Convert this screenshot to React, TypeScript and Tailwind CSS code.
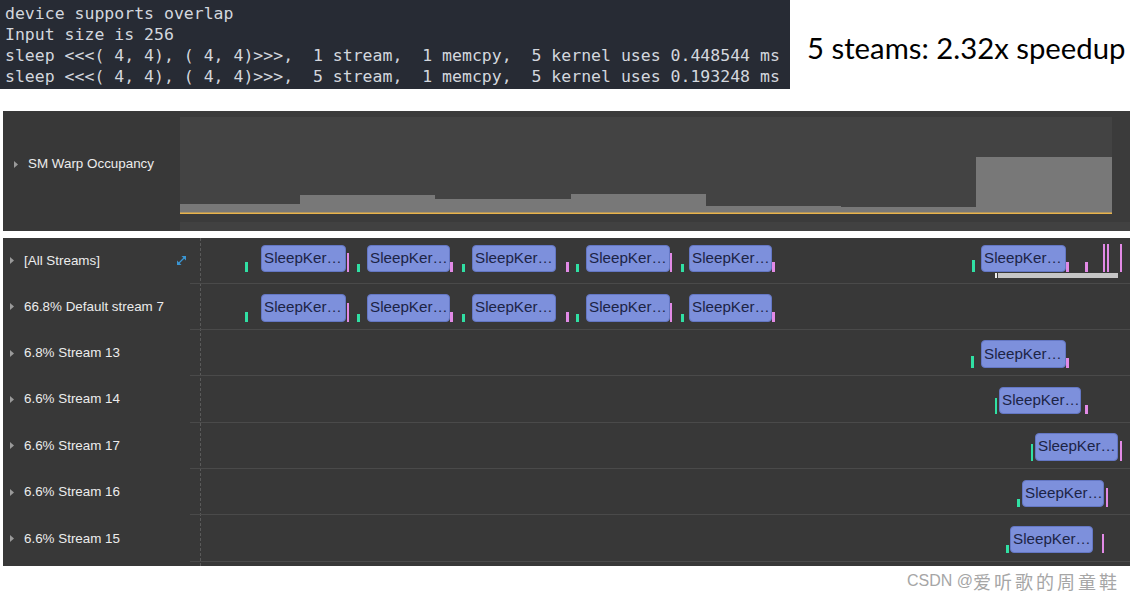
import React from 'react';

type Marker = { x: number; w: number; h: number; c: 'g' | 'p' };

interface Row {
  label: string;
  bottom: number;
  blocks: [number, number][];
  marks: Marker[];
  extra?: boolean;
}

// x values are page coords, panel starts at x=3
const OFF = 3;

const defaultMarks: Marker[] = [
  { x: 245, w: 3, h: 10, c: 'g' },
  { x: 347, w: 2, h: 19, c: 'p' },
  { x: 357, w: 3, h: 8, c: 'g' },
  { x: 450, w: 3, h: 10, c: 'p' },
  { x: 462, w: 3, h: 8, c: 'g' },
  { x: 566, w: 3, h: 10, c: 'p' },
  { x: 576, w: 3, h: 8, c: 'g' },
  { x: 670, w: 2, h: 19, c: 'p' },
  { x: 681, w: 3, h: 8, c: 'g' },
  { x: 772, w: 3, h: 10, c: 'p' },
];

const defaultBlocks: [number, number][] = [
  [261, 346],
  [367, 450],
  [472, 556],
  [586, 670],
  [689, 772],
];

const rows: Row[] = [
  {
    label: '[All Streams]',
    bottom: 34,
    blocks: [...defaultBlocks, [981, 1066]],
    marks: [
      ...defaultMarks,
      { x: 972, w: 3, h: 12, c: 'g' },
      { x: 1066, w: 3, h: 10, c: 'p' },
      { x: 1085, w: 3, h: 10, c: 'p' },
      { x: 1103, w: 2, h: 28, c: 'p' },
      { x: 1107, w: 2, h: 28, c: 'p' },
      { x: 1120, w: 2, h: 28, c: 'p' },
    ],
    extra: true,
  },
  { label: '66.8% Default stream 7', bottom: 38, blocks: defaultBlocks, marks: defaultMarks },
  {
    label: '6.8% Stream 13',
    bottom: 38,
    blocks: [[981, 1066]],
    marks: [
      { x: 971, w: 3, h: 12, c: 'g' },
      { x: 1066, w: 3, h: 10, c: 'p' },
    ],
  },
  {
    label: '6.6% Stream 14',
    bottom: 38,
    blocks: [[999, 1081]],
    marks: [
      { x: 995, w: 2, h: 16, c: 'g' },
      { x: 1085, w: 3, h: 9, c: 'p' },
    ],
  },
  {
    label: '6.6% Stream 17',
    bottom: 38,
    blocks: [[1035, 1118]],
    marks: [
      { x: 1031, w: 2, h: 17, c: 'g' },
      { x: 1120, w: 2, h: 20, c: 'p' },
    ],
  },
  {
    label: '6.6% Stream 16',
    bottom: 38,
    blocks: [[1022, 1104]],
    marks: [
      { x: 1017, w: 3, h: 8, c: 'g' },
      { x: 1106, w: 2, h: 19, c: 'p' },
    ],
  },
  {
    label: '6.6% Stream 15',
    bottom: 38,
    blocks: [[1010, 1093]],
    marks: [
      { x: 1006, w: 3, h: 8, c: 'g' },
      { x: 1102, w: 2, h: 19, c: 'p' },
    ],
  },
];

const termLines = [
  'device supports overlap',
  'Input size is 256',
  'sleep <<<( 4, 4), ( 4, 4)>>>,  1 stream,  1 memcpy,  5 kernel uses 0.448544 ms',
  'sleep <<<( 4, 4), ( 4, 4)>>>,  5 stream,  1 memcpy,  5 kernel uses 0.193248 ms',
];

const Caret = () => (
  <svg width="4" height="7" viewBox="0 0 4 7" className="shrink-0">
    <path d="M0 0 L4 3.5 L0 7 Z" fill="#9a9a9a" />
  </svg>
);

const ExpandIcon = () => (
  <svg width="11" height="11" viewBox="0 0 11 11">
    <path d="M2 9 L9 2" stroke="#3a95d2" strokeWidth="1.3" />
    <path d="M5.5 1 L10 1 L10 5.5 Z" fill="#3a95d2" />
    <path d="M1 5.5 L1 10 L5.5 10 Z" fill="#3a95d2" />
  </svg>
);

const OccupancyChart = () => {
  // x from 180, y from 117 (page coords)
  const steps: [number, number, number][] = [
    [180, 300, 204],
    [300, 435, 195],
    [435, 571, 199],
    [571, 706, 194],
    [706, 841, 206],
    [841, 976, 207],
    [976, 1112, 157],
  ];
  return (
    <svg width="932" height="97" viewBox="0 0 932 97" className="block">
      <rect x="0" y="0" width="932" height="97" fill="#434343" />
      {steps.map(([a, b, t]) => (
        <rect key={a} x={a - 180} y={t - 117} width={b - a} height={96 - (t - 117)} fill="#787878" />
      ))}
      <rect x="0" y="95.5" width="932" height="1.5" fill="#e9b34b" />
    </svg>
  );
};

const TimelineRow = ({ row, first }: { row: Row; first: boolean }) => {
  const top = row.bottom - 27.5;
  return (
    <div className={`relative ${first ? 'h-[45.5px]' : 'h-[46.4px]'}`}>
      <div className="absolute bottom-0 left-[187px] right-0 h-px bg-[#4a4a4a]" />
      <div className="flex h-full items-center gap-[10px] pl-[7px]">
        <Caret />
        <span className="text-[13.4px] text-[#ececec]">{row.label}</span>
      </div>
      {first && (
        <div className="absolute left-[173px] top-[17px]">
          <ExpandIcon />
        </div>
      )}
      {row.blocks.map(([a, b]) => (
        <div
          key={a}
          className="absolute flex items-center rounded-[4px] border border-[#6477c4] bg-[#7d90dc] pb-[2px] pl-[2px] text-[15.2px] leading-none whitespace-nowrap text-[#1c2446]"
          style={{ left: a - OFF, width: b - a, top, height: 27.5 }}
        >
          SleepKer…
        </div>
      ))}
      {row.marks.map((m, i) => (
        <div
          key={i}
          className={`absolute ${m.c === 'g' ? 'bg-[#30e0a4]' : 'bg-[#e28ae6]'}`}
          style={{ left: m.x - OFF, width: m.w, height: m.h, top: row.bottom - m.h }}
        />
      ))}
      {row.extra && (
        <>
          <div className="absolute left-[992px] top-[35px] h-[5px] w-[1.5px] bg-[#eeeeee]" />
          <div className="absolute left-[995px] top-[35px] h-[5px] w-[120px] bg-[#c6c6c6]" />
        </>
      )}
    </div>
  );
};

export default function App() {
  return (
    <div className="h-[598px] w-[1133px] overflow-hidden bg-white font-['Liberation_Sans',sans-serif]">
      <div className="flex h-[89px]">
        <div className="h-[89px] w-[790px] bg-[#272b34] pl-[5px] pt-[3px] font-['DejaVu_Sans_Mono',monospace] text-[16.5px] leading-[21px] text-[#d3d7de]">
          {termLines.map((l) => (
            <div key={l} className="whitespace-pre">
              {l}
            </div>
          ))}
        </div>
        <div className="flex flex-1 items-center whitespace-nowrap pl-[17px] pt-[6px] font-['Lato',sans-serif] text-[29.3px] text-black">
          5 steams: 2.32x speedup
        </div>
      </div>

      <div className="mx-[3px] mt-[22px] flex h-[120px] bg-[#383838]">
        <div className="flex w-[177px] items-center gap-[10px] pl-[11px] pb-[13px]">
          <Caret />
          <span className="text-[13.4px] text-[#ececec]">SM Warp Occupancy</span>
        </div>
        <div className="flex flex-1 flex-col bg-[#3b3b3b] pt-[6px]">
          <div className="flex">
            <OccupancyChart />
          </div>
          <div className="mt-[8px] h-[9px] bg-[#414141]" />
        </div>
      </div>

      <div className="relative mx-[3px] mt-[7px] h-[327.5px] bg-[#383838]">
        <div className="absolute bottom-0 left-[197px] top-0 border-l border-dashed border-[#5a5a5a]" />
        {rows.map((r, i) => (
          <TimelineRow key={r.label} row={r} first={i === 0} />
        ))}
      </div>

      <div className="flex items-center justify-end pr-[13px] pt-[3px] text-[16px] text-[#a6a6a6]">
        <span>CSDN @</span>
        <span className="font-['Noto_Sans_CJK_SC',sans-serif] text-[18px] leading-[22px] tracking-[3px]">爱听歌的周童鞋</span>
      </div>
    </div>
  );
}
